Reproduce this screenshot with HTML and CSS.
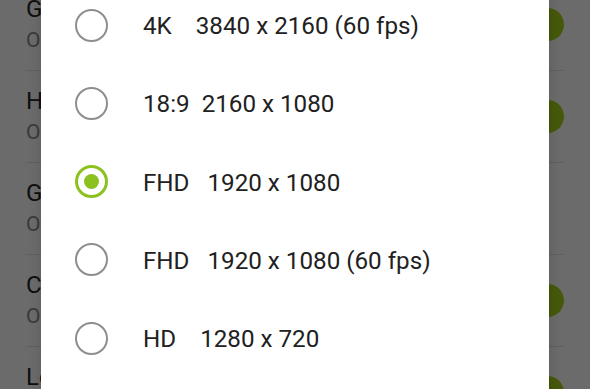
FILE: index.html
```html
<!DOCTYPE html>
<html>
<head>
<meta charset="utf-8">
<link rel="stylesheet" href="styles.css">
</head>
<body>
<div class="settings">
  <div class="pref">
    <div class="pref-text"><div class="pref-title">Geo-tagging</div><div class="pref-sub">On</div></div>
    <div class="switch on"><span class="track"></span><span class="knob"></span></div>
  </div>
  <div class="pref">
    <div class="pref-text"><div class="pref-title">HDR</div><div class="pref-sub">On</div></div>
    <div class="switch on"><span class="track"></span><span class="knob"></span></div>
  </div>
  <div class="pref">
    <div class="pref-text"><div class="pref-title">Grid lines</div><div class="pref-sub">Off</div></div>
    <div class="switch off"><span class="track"></span><span class="knob"></span></div>
  </div>
  <div class="pref">
    <div class="pref-text"><div class="pref-title">Camera sound</div><div class="pref-sub">On</div></div>
    <div class="switch on"><span class="track"></span><span class="knob"></span></div>
  </div>
  <div class="pref">
    <div class="pref-text"><div class="pref-title">Location tags</div><div class="pref-sub">On</div></div>
    <div class="switch on"><span class="track"></span><span class="knob"></span></div>
  </div>
</div>

<div class="scrim"></div>

<div class="dialog">
  <div class="option"><span class="radio"></span><span class="label">4K    3840 x 2160 (60 fps)</span></div>
  <div class="option"><span class="radio"></span><span class="label">18:9  2160 x 1080</span></div>
  <div class="option"><span class="radio checked"></span><span class="label">FHD   1920 x 1080</span></div>
  <div class="option"><span class="radio"></span><span class="label">FHD   1920 x 1080 (60 fps)</span></div>
  <div class="option"><span class="radio"></span><span class="label">HD    1280 x 720</span></div>
</div>
</body>
</html>
```

FILE: styles.css
```css
html, body {
  margin: 0;
  padding: 0;
}

body {
  width: 590px;
  height: 389px;
  overflow: hidden;
  background: #ffffff;
  font-family: Roboto, "Noto Sans", sans-serif;
  position: relative;
}

.settings {
  padding: 0 26px;
  margin-top: -21px;
}

.pref {
  height: 92px;
  box-sizing: border-box;
  border-bottom: 1px solid #e2e2e2;
  display: flex;
  align-items: center;
}

.pref-text {
  flex: 1;
  padding-bottom: 2px;
}

.pref-title {
  font-size: 24px;
  line-height: 32px;
  color: #262626;
  white-space: nowrap;
}

.pref-sub {
  font-size: 21px;
  line-height: 30px;
  color: #8a8a8a;
  white-space: nowrap;
}

.switch {
  position: relative;
  width: 60px;
  height: 33px;
  display: flex;
  align-items: center;
}

.switch .track {
  display: block;
  width: 36px;
  height: 20px;
  margin-left: 4px;
  border-radius: 10px;
  background: #c8e47e;
}

.switch.off .track {
  background: #bdbdbd;
}

.switch .knob {
  position: absolute;
  top: 0;
  right: 0;
  width: 33px;
  height: 33px;
  border-radius: 50%;
  background: #a8d418;
}

.switch.off .knob {
  right: auto;
  left: 0;
  background: #f1f1f1;
}

.scrim {
  position: absolute;
  inset: 0;
  background: rgba(0, 0, 0, 0.58);
}

.dialog {
  position: absolute;
  left: 41px;
  top: -14px;
  width: 508px;
  height: 420px;
  background: #ffffff;
  box-shadow: 0 0 12px rgba(0, 0, 0, 0.15);
}

.option {
  height: 78.25px;
  display: flex;
  align-items: center;
  padding-left: 34px;
}

.radio {
  width: 33px;
  height: 33px;
  box-sizing: border-box;
  border: 2px solid #8e8e8e;
  border-radius: 50%;
  margin-right: 35px;
  flex: none;
  position: relative;
}

.radio.checked {
  border: 3.5px solid #8cc21f;
}

.radio.checked::after {
  content: "";
  position: absolute;
  left: 50%;
  top: 50%;
  width: 15px;
  height: 15px;
  margin: -7.5px 0 0 -7.5px;
  border-radius: 50%;
  background: #8cc21f;
}

.label {
  font-size: 24.2px;
  line-height: 32px;
  color: #212121;
  white-space: pre;
  padding-top: 2px;
}
```
